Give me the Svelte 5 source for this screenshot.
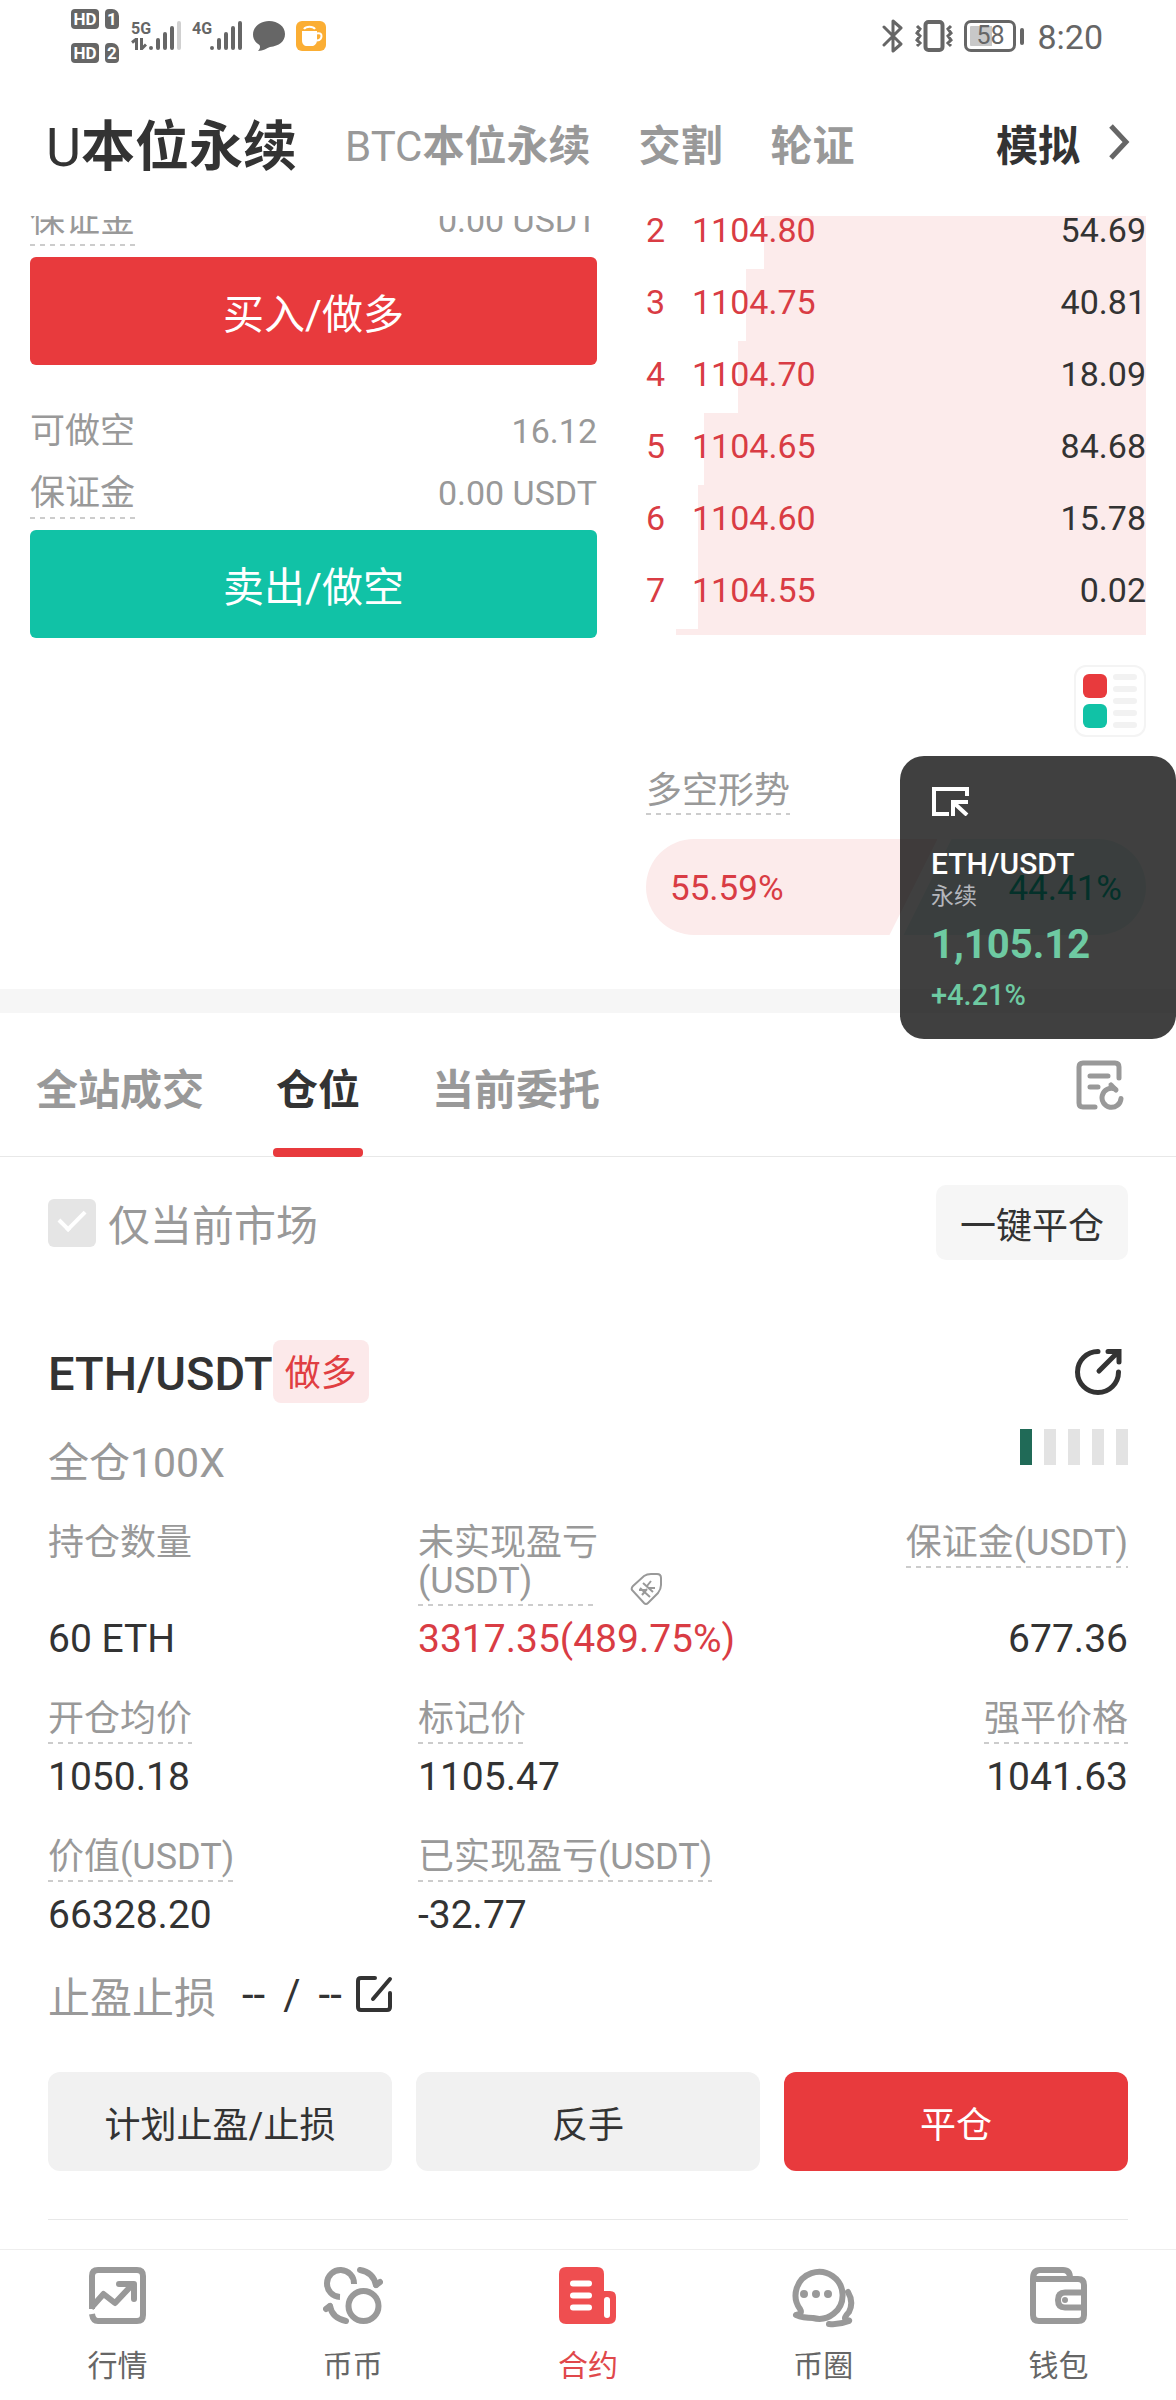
<script lang="ts">
  const markets = [
    { prefix: 'BTC', name: '本位永续' },
    { prefix: '', name: '交割' },
    { prefix: '', name: '轮证' },
  ]

  const asks = [
    { level: 2, price: '1104.80', amount: '54.69', depth: 76.4 },
    { level: 3, price: '1104.75', amount: '40.81', depth: 80 },
    { level: 4, price: '1104.70', amount: '18.09', depth: 81.6 },
    { level: 5, price: '1104.65', amount: '84.68', depth: 88.4 },
    { level: 6, price: '1104.60', amount: '15.78', depth: 89.6 },
    { level: 7, price: '1104.55', amount: '0.02', depth: 89.6 },
  ]
  const nextDepth = 94

  const ratio = { long: 55.59, short: 44.41 }

  const tabs = ['全站成交', '仓位', '当前委托']
  let activeTab = '仓位'
  let onlyCurrent = true

  // 仓位卡片的字段，按行排列
  const fields = [
    { label: '持仓数量', value: '60 ETH', plain: true },
    { label: '未实现盈亏(USDT)', value: '3317.35(489.75%)', profit: true },
    { label: '保证金(USDT)', value: '677.36' },
    { label: '开仓均价', value: '1050.18' },
    { label: '标记价', value: '1105.47' },
    { label: '强平价格', value: '1041.63' },
    { label: '价值(USDT)', value: '66328.20' },
    { label: '已实现盈亏(USDT)', value: '-32.77' },
  ]

  const riskLevel = 1
  const risks = [1, 2, 3, 4, 5]

  const navs = [
    { key: 'market', text: '行情' },
    { key: 'coin', text: '币币' },
    { key: 'contract', text: '合约' },
    { key: 'circle', text: '币圈' },
    { key: 'wallet', text: '钱包' },
  ]
  let activeNav = 'contract'
</script>

<div class="page">
  <div class="status">
    <div class="status__group">
      <div class="sims">
        <div class="sims__row"><span class="hd">HD</span><span class="sim">1</span></div>
        <div class="sims__row"><span class="hd">HD</span><span class="sim">2</span></div>
      </div>
      <div class="net">
        <div class="net__type">
          <span>5G</span>
          <svg width="16" height="12" viewBox="0 0 16 12" fill="none" stroke="#666" stroke-width="3">
            <path d="M1 4.5 5.500 1V12M10.500 0V11L15 6.500" />
          </svg>
        </div>
        <svg width="34" height="32" viewBox="0 0 34 32" stroke="#666" stroke-width="4" stroke-linecap="round">
          <path d="M3 28v0M10 20v8M17 14v14M24 8v20" />
          <path d="M31 3v25" stroke="#d0d0d0" />
        </svg>
      </div>
      <div class="net">
        <div class="net__type"><span>4G</span></div>
        <svg width="34" height="32" viewBox="0 0 34 32" stroke="#666" stroke-width="4" stroke-linecap="round">
          <path d="M3 28v0M10 20v8M17 14v14M24 8v20M31 3v25" />
        </svg>
      </div>
      <svg class="bubble" width="32" height="32" viewBox="0 0 32 32" fill="#666">
        <path d="M16 1C25 1 32 6.500 32 14S26 26 17 27C14 28 10 31 5 31C7 29 7.500 27 6.500 25C2.500 22.500 0 19 0 14.500C0 7 7 1 16 1z" />
      </svg>
      <svg class="cup" width="30" height="32" viewBox="0 0 30 32">
        <rect y="1" width="30" height="30" rx="6" fill="#fbae34" />
        <path d="M6 11h15v9c0 4-3 6-5 6h-5c-3 0-5-2-5-6z" fill="#fff" />
        <path d="M21 13.500c6-2 6 6 0 7" fill="none" stroke="#fff" stroke-width="2" />
        <path d="M8 9c2-3 9-3 11 0" fill="none" stroke="#fff" stroke-width="2" />
      </svg>
    </div>
    <div class="status__group">
      <svg width="22" height="34" viewBox="0 0 22 34" fill="none" stroke="#666" stroke-width="3" stroke-linejoin="round" stroke-linecap="round">
        <path d="M2 8 19 25 11 32V2l8 7L2 26" />
      </svg>
      <svg class="vibrate" width="40" height="34" viewBox="0 0 40 34" fill="none" stroke="#666">
        <rect x="11.500" y="3" width="17" height="28" rx="3" stroke-width="4" />
        <path d="M3 7l3 3-3 4 3 3-3 4 3 3-3 3M37 7l-3 3 3 4-3 3 3 4-3 3 3 3" stroke-width="3" />
      </svg>
      <div class="battery"><span>58</span></div>
      <div class="battery__cap"></div>
      <time class="clock">8:20</time>
    </div>
  </div>

  <header class="header">
    <h1><span class="latin">U</span>本位永续</h1>
    {#each markets as market}
      <button class="header__market"><span class="latin">{market.prefix}</span>{market.name}</button>
    {/each}
    <button class="header__demo">
      模拟
      <svg width="22" height="36" viewBox="0 0 22 36" fill="none" stroke="#666" stroke-width="5">
        <path d="M3 2 18 18 3 34" />
      </svg>
    </button>
  </header>

  <main>
    <section class="trade">
      <div class="order">
        <div class="order__row order__row--cut">
          <span class="dashed">保证金</span>
          <span>0.00 USDT</span>
        </div>
        <button class="order__btn order__btn--buy">买入/做多</button>
        <div class="order__row order__row--first">
          <span>可做空</span>
          <span>16.12</span>
        </div>
        <div class="order__row">
          <span class="dashed">保证金</span>
          <span>0.00 USDT</span>
        </div>
        <button class="order__btn order__btn--sell">卖出/做空</button>
      </div>

      <div class="side">
        <div class="book">
          <table>
            <tbody>
              {#each asks as ask (ask.level)}
                <tr style:--depth={ask.depth + '%'}>
                  <td class="book__level">{ask.level}</td>
                  <td class="book__price">{ask.price}</td>
                  <td class="book__amount">{ask.amount}</td>
                </tr>
              {/each}
            </tbody>
          </table>
          <div class="book__next" style:width={nextDepth + '%'}></div>
        </div>

        <button class="layout-btn" aria-label="盘口布局">
          <svg width="54" height="54" viewBox="0 0 54 54">
            <rect width="24" height="24" rx="6" fill="#e83a3d" />
            <rect y="30" width="24" height="24" rx="6" fill="#11c2a6" />
            <path d="M33 3h18M33 15h18M33 27h18M33 39h18M33 51h18" stroke="#f2f2f2" stroke-width="6" stroke-linecap="round" />
          </svg>
        </button>

        <div class="ratio__title"><span class="dashed">多空形势</span></div>
        <div class="ratio">
          <div class="ratio__long" style:flex-grow={ratio.long}>{ratio.long}%</div>
          <div class="ratio__short" style:flex-grow={ratio.short}>{ratio.short}%</div>
        </div>
      </div>

      <aside class="float">
        <svg width="38" height="30" viewBox="0 0 38 30" fill="none" stroke="#fff" stroke-width="4">
          <path d="M18 28H3V3h33v7" />
          <path d="M22 30V16h15M23 17l13 12" />
        </svg>
        <strong class="float__pair">ETH/USDT</strong>
        <span class="float__kind">永续</span>
        <strong class="float__price">1,105.12</strong>
        <span class="float__change">+4.21%</span>
      </aside>
    </section>

    <nav class="tabs">
      {#each tabs as tab}
        <button class="tabs__item" class:active={tab === activeTab} on:click={() => (activeTab = tab)}>{tab}</button>
      {/each}
      <button class="tabs__history" aria-label="历史记录">
        <svg width="48" height="50" viewBox="0 0 48 50" fill="none" stroke="#999" stroke-width="5" stroke-linecap="round" stroke-linejoin="round">
          <path d="M19 47H7q-4 0-4-4V7q0-4 4-4h32q4 0 4 4v11" />
          <path d="M14 16h18M14 27h8" />
          <path d="M45 38.500a9.500 9.500 0 1 1-6-9.500" />
          <path d="M35 25l5 5" />
        </svg>
      </button>
    </nav>

    <div class="filter">
      <label class="filter__label">
        <input type="checkbox" bind:checked={onlyCurrent} />
        <span>仅当前市场</span>
      </label>
      <button class="filter__close">一键平仓</button>
    </div>

    <article class="position">
      <div class="position__head">
        <h2>ETH/USDT</h2>
        <span class="position__side">做多</span>
        <button class="position__share" aria-label="分享">
          <svg width="48" height="48" viewBox="0 0 48 48" fill="none" stroke="#333" stroke-width="5" stroke-linecap="round">
            <path d="M24 3.500A20.500 20.500 0 1 0 44.500 24" />
            <path d="M25 23 43 5M34 3.500h11V14" />
          </svg>
        </button>
      </div>
      <div class="position__mode">
        <span>全仓100X</span>
        <div class="risk">
          {#each risks as risk}
            <i class:on={risk <= riskLevel}></i>
          {/each}
        </div>
      </div>

      <dl class="fields">
        {#each fields as field}
          <div class="field">
            <dt>
              <span class:dashed={!field.plain} class:wrap={field.profit}>{field.label}</span>
              {#if field.profit}
                <svg width="34" height="34" viewBox="0 0 34 34" fill="none" stroke="#999" stroke-width="2">
                  <path d="M3 14 14 4q3-2 7-2h6q4 0 4 4v7q0 4-3 8L18 31q-2 2-4 0L2 18q-1-2 1-4z" />
                  <path d="M10 16l10 9M13 11l10 9M12 23l5-6M17 14l4-5M18 16h7M9 18h7" />
                </svg>
              {/if}
            </dt>
            <dd class:profit={field.profit}>{field.value}</dd>
          </div>
        {/each}
      </dl>

      <div class="stop">
        <span class="stop__label">止盈止损</span>
        <span class="stop__value"><span>--</span><span>/</span><span>--</span></span>
        <button aria-label="编辑止盈止损">
          <svg width="38" height="38" viewBox="0 0 38 38" fill="none" stroke="#333" stroke-width="4" stroke-linecap="round" stroke-linejoin="round">
            <path d="M20 3H6Q3 3 3 6v26q0 3 3 3h26q3 0 3-3V18" />
            <path d="M18 24 35 4" />
          </svg>
        </button>
      </div>

      <div class="actions">
        <button>计划止盈/止损</button>
        <button>反手</button>
        <button class="primary">平仓</button>
      </div>
    </article>
  </main>

  <nav class="nav">
    {#each navs as nav (nav.key)}
      <button class="nav__item" class:active={nav.key === activeNav} on:click={() => (activeNav = nav.key)}>
        {#if nav.key === 'market'}
          <svg width="57" height="58" viewBox="0 0 57 58" fill="none" stroke="#999" stroke-width="6" stroke-linejoin="round">
            <path d="M3 42V9q0-6 6-6h39q6 0 6 6v39q0 6-6 6H9q-5 0-6-7" />
            <path d="M2 41 14.500 27 26 36 43 18" />
            <path d="M30 17h15v15" stroke-linecap="round" />
          </svg>
        {:else if nav.key === 'coin'}
          <svg width="60" height="58" viewBox="0 0 60 58" fill="none" stroke="#999" stroke-width="6">
            <path d="M17 30A13.500 13.500 0 1 1 31 17" />
            <circle cx="40.500" cy="39" r="15" />
            <path d="M37 3q13 2 16 15M23 54Q9 51 7 39" stroke-linecap="round" />
            <path d="M53 18l4-3M3 42l4-3" stroke-linecap="round" />
          </svg>
        {:else if nav.key === 'contract'}
          <svg width="58" height="58" viewBox="0 0 58 58">
            <path d="M7 0h31q7 0 7 7v17h6q6 0 6 6v20q0 7-7 7H7q-7 0-7-7V7q0-7 7-7z" fill="#ef4e50" />
            <path d="M14 16.500h16M14 28.500h16M14 40.500h16" stroke="#fff" stroke-width="6" stroke-linecap="round" />
            <rect x="45" y="30" width="6" height="21" rx="3" fill="#fff" />
          </svg>
        {:else if nav.key === 'circle'}
          <svg width="68" height="62" viewBox="0 0 68 62" fill="none" stroke="#999" stroke-width="6" stroke-linecap="round" stroke-linejoin="round">
            <path d="M7 48Q14 47 11 42A23.500 23.500 0 1 1 24 51Q14 51 7 48z" />
            <path d="M59 25q6 10 1 20-6 6-3 8 4 0 3 1-10 4-20 3" />
            <path d="M15 27v0M27 27v0M39 27v0" stroke-width="8" />
          </svg>
        {:else}
          <svg width="57" height="58" viewBox="0 0 57 58" fill="none" stroke="#999" stroke-width="6" stroke-linejoin="round">
            <path d="M3 12v36q0 6 6 6h39q6 0 6-6V18q0-6-6-6H3q0-9 7-9h23q7 0 7 8" />
            <path d="M54 25.500H35q-7 0-7 7.500t7 7.500h19" />
            <circle cx="35" cy="33" r="3" fill="#999" stroke="none" />
          </svg>
        {/if}
        <span>{nav.text}</span>
      </button>
    {/each}
  </nav>
</div>

<style>
  :global(body) {
    margin: 0;
    background: #fff;
  }
  .page {
    display: flex;
    flex-direction: column;
    min-height: 100vh;
    overflow: hidden;
    color: #333;
    background: #fff;
    font-family: Roboto, 'Noto Sans CJK SC', sans-serif;
    font-size: 36px;
  }
  svg {
    display: block;
    flex: none;
  }
  button {
    padding: 0;
    border: 0;
    background: none;
    color: inherit;
    font: inherit;
    cursor: pointer;
  }
  h1,
  h2,
  dl,
  dd {
    margin: 0;
  }
  .latin {
    font-weight: 400;
  }
  .dashed {
    padding-bottom: 6px;
    background: repeating-linear-gradient(90deg, #ccc 0 5px, transparent 5px 10px) bottom / 100% 2px no-repeat;
  }

  /* 系统状态栏 */
  .status {
    display: flex;
    justify-content: space-between;
    height: 72px;
    padding: 0 73px 0 71px;
    color: #666;
  }
  .status__group {
    display: flex;
    align-items: center;
  }
  .sims {
    display: grid;
    gap: 14px;
    margin-right: 12px;
  }
  .sims__row {
    display: flex;
    gap: 6px;
  }
  .hd,
  .sim {
    border-radius: 4px;
    background: #666;
    color: #fff;
    font-size: 17px;
    font-weight: 700;
    line-height: 20px;
    text-align: center;
  }
  .hd {
    width: 28px;
  }
  .sim {
    width: 14px;
    border-top-right-radius: 7px;
  }
  .net {
    display: flex;
    margin-right: 10px;
  }
  .net__type {
    width: 17px;
    font-size: 16px;
    font-weight: 700;
    line-height: 18px;
  }
  .bubble {
    margin-right: 11px;
  }
  .vibrate {
    margin: 0 10px;
  }
  .battery {
    box-sizing: border-box;
    width: 52px;
    height: 32px;
    padding: 3px;
    border: 3px solid #666;
    border-radius: 7px;
    text-align: center;
    font-size: 25px;
    line-height: 20px;
    background: linear-gradient(90deg, #c8c8c8 54%, transparent 54%) content-box;
  }
  .battery__cap {
    width: 4px;
    height: 17px;
    margin: 0 13px 0 4px;
    border-radius: 2px;
    background: #666;
  }
  .clock {
    padding-top: 2px;
    font-size: 34px;
  }

  .header {
    display: flex;
    align-items: center;
    gap: 48px;
    height: 140px;
    padding: 0 46px 4px;
    font-size: 42px;
    font-weight: 700;
    white-space: nowrap;
  }
  .header h1 {
    font-size: 54px;
    font-weight: 700;
  }
  .header__market {
    color: #999;
  }
  .header__demo {
    display: flex;
    align-items: center;
    gap: 28px;
    margin-left: auto;
  }

  main {
    overflow: hidden;
  }
  .trade {
    position: relative;
    display: grid;
    grid-template-columns: 567fr 500fr;
    gap: 49px;
    padding: 0 30px 54px;
    border-bottom: 24px solid #f6f6f6;
  }
  .order__row {
    display: flex;
    justify-content: space-between;
    margin-bottom: 11px;
    color: #999;
    font-size: 35px;
    line-height: 45px;
  }
  .order__row span:last-child {
    font-size: 34px;
  }
  .order .dashed {
    padding-bottom: 3px;
  }
  .order__row--cut {
    margin-top: -18px;
  }
  .order__row--first {
    margin: 44px 0 17px;
  }
  .order__btn {
    width: 100%;
    height: 108px;
    border-radius: 6px;
    color: #fff;
    font-size: 41px;
  }
  .order__btn--buy {
    background: #e83a3d;
  }
  .order__btn--sell {
    background: #11c2a6;
  }

  .side {
    display: flex;
    flex-direction: column;
  }
  .book {
    overflow: hidden;
    font-size: 34px;
  }
  .book table {
    width: 100%;
    margin-top: -19px;
    border-collapse: collapse;
  }
  .book tr {
    height: 72px;
    background: linear-gradient(#fcebeb, #fcebeb) right / var(--depth) 100% no-repeat;
  }
  .book td {
    box-sizing: border-box;
    height: 72px;
    padding: 0 0 6px;
    line-height: 40px;
  }
  .book__level,
  .book__price {
    color: #d93c44;
  }
  .book__level {
    width: 46px;
  }
  .book .book__amount {
    text-align: right;
  }
  .book__next {
    height: 6px;
    margin-left: auto;
    background: #fcebeb;
  }
  .layout-btn {
    align-self: flex-end;
    display: grid;
    place-items: center;
    width: 72px;
    height: 72px;
    margin-top: 30px;
    border: 2px solid #f4f4f4;
    border-radius: 12px;
  }
  .ratio__title {
    display: flex;
    margin: 34px 0 24px;
    color: #999;
    line-height: 40px;
  }
  .ratio__title .dashed {
    padding-bottom: 4px;
  }
  .ratio {
    display: flex;
    height: 96px;
    border-radius: 48px;
    overflow: hidden;
    font-size: 35px;
    line-height: 96px;
  }
  .ratio div {
    box-sizing: border-box;
    flex-basis: 0;
    padding: 2px 24px 0;
  }
  .ratio .ratio__long {
    color: #d93c44;
    background: #fcebeb;
    clip-path: polygon(0 0, 100% 0, calc(100% - 48px) 100%, 0 100%);
  }
  .ratio .ratio__short {
    margin-left: -34px;
    color: #11c2a6;
    background: #e7f8f5;
    text-align: right;
    clip-path: polygon(48px 0, 100% 0, 100% 100%, 0 100%);
  }

  /* 悬浮行情窗 */
  .float {
    position: absolute;
    right: 0;
    top: 540px;
    box-sizing: border-box;
    display: flex;
    flex-direction: column;
    width: 276px;
    height: 283px;
    padding: 30px 31px 0;
    border-radius: 24px;
    background: rgba(0, 0, 0, 0.75);
  }
  .float__pair {
    margin-top: 31px;
    color: #fff;
    font-size: 30px;
    font-weight: 500;
    line-height: 34px;
  }
  .float__kind {
    padding-top: 2px;
    color: #b4b6bc;
    font-size: 23px;
    line-height: 28px;
  }
  .float__price {
    margin-top: 9px;
    color: #6ecaa2;
    font-size: 40px;
    font-weight: 700;
    line-height: 50px;
  }
  .float__change {
    margin-top: 5px;
    color: #6ecaa2;
    font-size: 29px;
    font-weight: 500;
    line-height: 40px;
  }

  .tabs {
    display: flex;
    align-items: center;
    gap: 72px;
    height: 143px;
    padding: 0 52px 0 36px;
    border-bottom: 1px solid #e8e8e8;
    color: #999;
    font-size: 42px;
    font-weight: 700;
  }
  .tabs__item {
    position: relative;
    height: 100%;
    padding-top: 3px;
  }
  .tabs__item.active {
    color: #333;
  }
  .tabs__item.active::after {
    content: '';
    position: absolute;
    left: -3px;
    right: -3px;
    bottom: -1px;
    height: 9px;
    border-radius: 4px;
    background: #e83a3d;
  }
  .tabs__history {
    margin-left: auto;
  }

  .filter {
    display: flex;
    align-items: center;
    justify-content: space-between;
    padding: 28px 48px 0;
  }
  .filter__label {
    display: flex;
    align-items: center;
    gap: 12px;
    color: #999;
    font-size: 42px;
    line-height: 67px;
  }
  .filter__label span {
    padding-top: 8px;
  }
  .filter__label input {
    appearance: none;
    display: grid;
    place-items: center;
    width: 48px;
    height: 48px;
    margin: 0;
    border-radius: 6px;
    background: #e5e5e5;
  }
  .filter__label input:checked::before {
    content: '';
    width: 22px;
    height: 11px;
    margin-bottom: 10px;
    border: solid #fff;
    border-width: 0 0 4px 4px;
    transform: rotate(-45deg);
  }
  .filter__close {
    width: 192px;
    height: 75px;
    border-radius: 10px;
    background: #f6f6f6;
  }

  .position {
    margin: 79px 48px 0;
    padding-bottom: 48px;
    border-bottom: 1px solid #e8e8e8;
  }
  .position__head {
    display: flex;
    align-items: center;
    height: 64px;
  }
  .position__head h2 {
    padding-top: 4px;
    font-size: 47px;
    font-weight: 500;
  }
  .position__side {
    padding: 6px 12px 0;
    border-radius: 8px;
    background: #fce9ea;
    color: #e03e42;
    line-height: 57px;
  }
  .position__share {
    margin: 2px 6px 0 auto;
  }
  .position__mode {
    display: flex;
    align-items: center;
    justify-content: space-between;
    height: 64px;
    margin-top: 28px;
    color: #999;
    font-size: 41px;
    line-height: 64px;
  }
  .risk {
    display: flex;
    gap: 12px;
    margin-bottom: 32px;
  }
  .risk i {
    width: 12px;
    height: 36px;
    background: #e3e3e3;
  }
  .risk i.on {
    background: #206a57;
  }

  .fields {
    display: grid;
    grid-template-columns: 370fr 370fr 340fr;
    gap: 37px 0;
    margin-top: 29px;
  }
  .field {
    display: flex;
    flex-direction: column;
    justify-content: space-between;
    gap: 9px;
  }
  .field:nth-child(3n) {
    align-items: flex-end;
  }
  .field dt {
    display: flex;
    align-items: flex-end;
    gap: 32px;
    color: #999;
    line-height: 38px;
    white-space: nowrap;
  }
  .field .wrap {
    width: 180px;
    white-space: normal;
  }
  .field dd {
    font-size: 39px;
    line-height: 48px;
  }
  .field dd.profit {
    color: #d93c44;
  }

  .stop {
    display: flex;
    align-items: center;
    margin-top: 20px;
    height: 70px;
    font-size: 42px;
  }
  .stop__label {
    margin-right: 26px;
    color: #999;
  }
  .stop__value {
    display: flex;
    gap: 18px;
    margin-right: 13px;
  }

  .actions {
    display: grid;
    grid-template-columns: repeat(3, 1fr);
    gap: 24px;
    margin-top: 43px;
  }
  .actions button {
    height: 99px;
    border-radius: 12px;
    background: #f1f1f1;
  }
  .actions .primary {
    background: #e83a3d;
    color: #fff;
  }

  .nav {
    display: grid;
    grid-template-columns: repeat(5, 1fr);
    height: 151px;
    margin-top: auto;
    border-top: 1px solid #eee;
    box-sizing: border-box;
  }
  .nav__item {
    display: flex;
    flex-direction: column;
    align-items: center;
    padding-top: 17px;
    color: #666;
    font-size: 30px;
    line-height: 40px;
  }
  .nav__item span {
    margin-top: auto;
    margin-bottom: 14px;
  }
  .nav__item.active {
    color: #e0484b;
  }
</style>
